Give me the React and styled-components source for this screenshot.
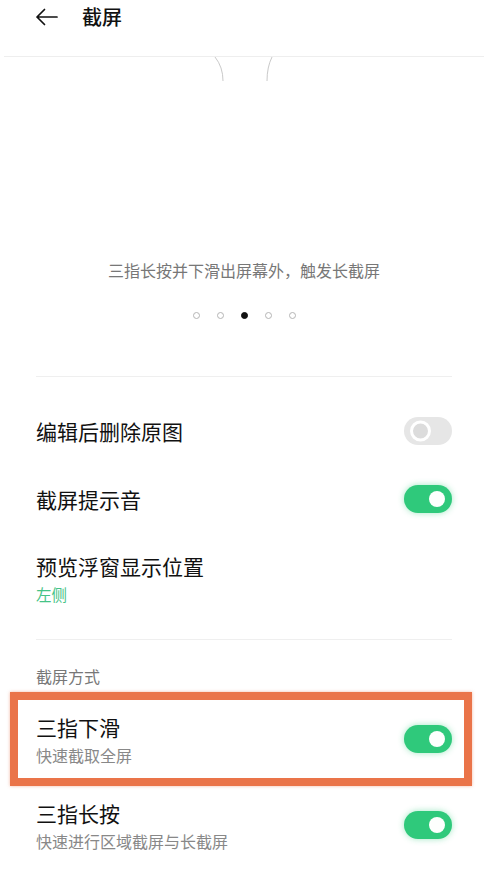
import React from "react";
import styled, { createGlobalStyle } from "styled-components";

const Global = createGlobalStyle`
  html, body { margin: 0; padding: 0; background: #fff; }
  body { font-family: "Noto Sans CJK SC", "Noto Sans", sans-serif; color: #111; }
  * { box-sizing: border-box; }
`;

const Page = styled.div`
  width: 492px;
  height: 872px;
  overflow: hidden;
  background: #fff;
`;

const Header = styled.header`
  height: 57px;
  margin: 0 8px 0 4px;
  padding: 4px 0 0 31px;
  display: flex;
  align-items: flex-start;
  gap: 23px;
  border-bottom: 1px solid #eeeeee;
`;

const BackIcon = styled.svg`
  width: 24px;
  height: 26px;
  display: block;
`;

const Title = styled.h1`
  margin: 0;
  font-size: 20px;
  line-height: 26px;
  font-weight: 500;
  color: #111;
`;

const Hero = styled.section`
  display: flex;
  flex-direction: column;
  align-items: center;
  padding-right: 4px;
`;

const PhoneEdges = styled.svg`
  width: 70px;
  height: 24px;
  display: block;
`;

const Caption = styled.p`
  margin: 177px 0 0;
  font-size: 16px;
  line-height: 24px;
  color: #777;
`;

const Dots = styled.div`
  margin-top: 30px;
  display: flex;
  gap: 17px;
`;

const Dot = styled.span`
  width: 7px;
  height: 7px;
  border-radius: 50%;
  border: 1px solid ${(p) => (p.$active ? "#111" : "#b5b5b5")};
  background: ${(p) => (p.$active ? "#111" : "#fff")};
`;

const Divider = styled.div`
  height: 1px;
  background: #efefef;
  margin: ${(p) => p.$mt || 0}px 40px 0 36px;
`;

const List = styled.div`
  padding-top: 20px;
`;

const Row = styled.div`
  display: flex;
  align-items: center;
  justify-content: space-between;
  min-height: ${(p) => p.$h || 68}px;
  padding: ${(p) => p.$pad || "0 40px 0 36px"};
  margin-top: ${(p) => p.$mt || 0}px;
`;

const Texts = styled.div`
  display: flex;
  flex-direction: column;
  gap: 2px;
`;

const RowTitle = styled.div`
  font-size: 21px;
  line-height: 30px;
  color: #111;
`;

const RowSub = styled.div`
  font-size: ${(p) => (p.$green ? 15.5 : 16)}px;
  line-height: 22px;
  color: ${(p) => (p.$green ? "#45c387" : "#888")};
`;

const SectionLabel = styled.div`
  margin: 25px 0 0 36px;
  font-size: 16px;
  line-height: 22px;
  color: #777;
`;

const Highlight = styled.div`
  margin: 5px 20px 0 10px;
  border: 8px solid #ea7449;
  box-shadow: 0 0 3px rgba(234, 116, 73, 0.5);
`;

const Toggle = styled.span`
  position: relative;
  flex: none;
  width: 48px;
  height: 28px;
  border-radius: 14px;
  background: ${(p) => (p.$on ? "#2fc97b" : "#e6e6e6")};
  box-shadow: ${(p) => (p.$on ? "0 0 6px rgba(47, 201, 123, 0.45)" : "none")};
  &::after {
    content: "";
    position: absolute;
    top: 50%;
    transform: translateY(-50%);
    width: 16px;
    height: 16px;
    border-radius: 50%;
    ${(p) =>
      p.$on
        ? "right: 7px; background: #fdfffd;"
        : "left: 6px; width: 15px; height: 15px; background: #dcdcdc; border: 3px solid #fff;"}
  }
`;

function Setting({ title, sub, green, toggle, on, h, pad, mt }) {
  return (
    <Row $h={h} $pad={pad} $mt={mt}>
      <Texts>
        <RowTitle>{title}</RowTitle>
        {sub && <RowSub $green={green}>{sub}</RowSub>}
      </Texts>
      {toggle && <Toggle $on={on} />}
    </Row>
  );
}

export default function App() {
  return (
    <Page>
      <Global />
      <Header>
        <BackIcon viewBox="0 0 24 26" fill="none" stroke="#111" strokeWidth="1.7" strokeLinecap="round" strokeLinejoin="round">
          <path d="M22 13H2M9.5 5.5L2 13l7.5 7.5" />
        </BackIcon>
        <Title>截屏</Title>
      </Header>
      <Hero>
        <PhoneEdges viewBox="0 0 70 24" fill="none" stroke="#c9c9c9" strokeWidth="1">
          <path d="M6 0 Q14 10 14 24" />
          <path d="M63 0 Q58 10 58 24" />
        </PhoneEdges>
        <Caption>三指长按并下滑出屏幕外，触发长截屏</Caption>
        <Dots>
          <Dot />
          <Dot />
          <Dot $active />
          <Dot />
          <Dot />
        </Dots>
      </Hero>
      <Divider $mt={57} />
      <List>
        <Setting title="编辑后删除原图" toggle on={false} />
        <Setting title="截屏提示音" toggle on />
        <Setting title="预览浮窗显示位置" sub="左侧" green h={106} pad="17px 40px 33px 36px" />
      </List>
      <Divider />
      <SectionLabel>截屏方式</SectionLabel>
      <Highlight>
        <Setting title="三指下滑" sub="快速截取全屏" toggle on h={78} pad="12px 12px 12px 18px" />
      </Highlight>
      <Setting title="三指长按" sub="快速进行区域截屏与长截屏" toggle on h={54} mt={12} />
    </Page>
  );
}
